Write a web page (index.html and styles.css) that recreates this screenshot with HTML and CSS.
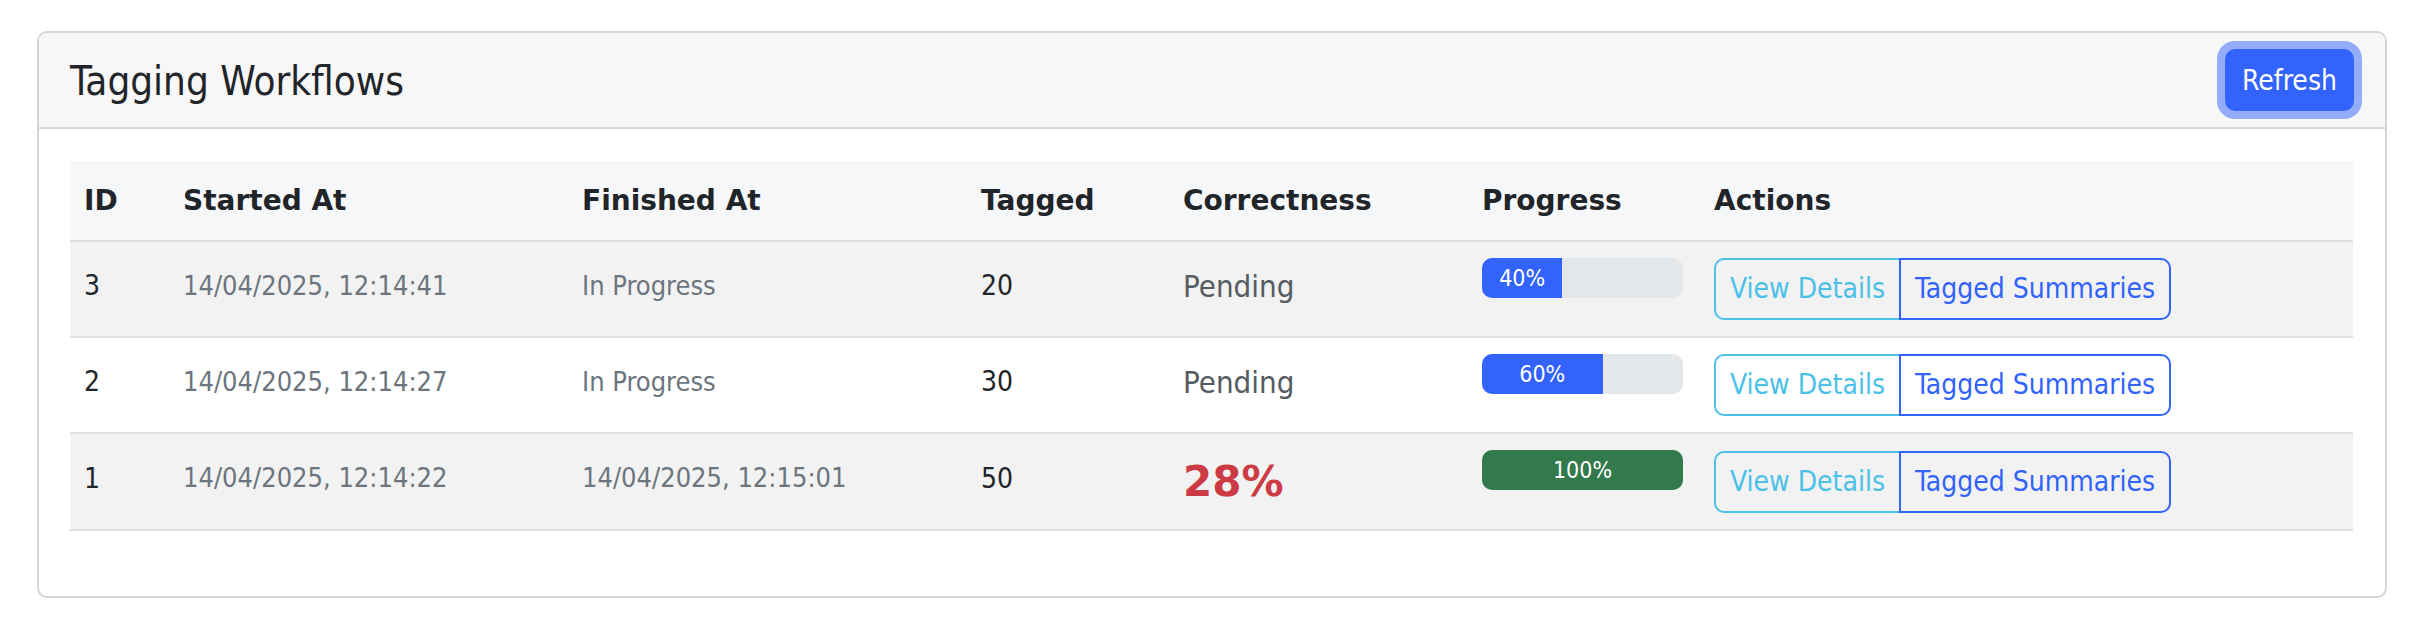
FILE: index.html
```html
<!DOCTYPE html>
<html lang="en">
<head>
<meta charset="utf-8">
<title>Tagging Workflows</title>
<link rel="stylesheet" href="styles.css">
</head>
<body>
<div class="page">
  <div class="card">
    <div class="card-header">
      <h4 class="card-title">Tagging Workflows</h4>
      <button class="btn-refresh" type="button">Refresh</button>
    </div>
    <div class="card-body">
      <table class="wf-table">
        <colgroup>
          <col class="col-id"><col class="col-start"><col class="col-finish"><col class="col-tagged"><col class="col-correct"><col class="col-progress"><col class="col-actions">
        </colgroup>
        <thead>
          <tr>
            <th>ID</th><th>Started At</th><th>Finished At</th><th>Tagged</th><th>Correctness</th><th>Progress</th><th>Actions</th>
          </tr>
        </thead>
        <tbody>
          <tr class="striped">
            <td class="id">3</td>
            <td class="muted">14/04/2025, 12:14:41</td>
            <td class="muted">In Progress</td>
            <td class="num">20</td>
            <td class="pending">Pending</td>
            <td class="prog-cell"><div class="progress"><div class="bar bar-blue" style="width:40%">40%</div></div></td>
            <td class="actions"><div class="btn-group"><button class="btn-o btn-info" type="button">View Details</button><button class="btn-o btn-primary" type="button">Tagged Summaries</button></div></td>
          </tr>
          <tr>
            <td class="id">2</td>
            <td class="muted">14/04/2025, 12:14:27</td>
            <td class="muted">In Progress</td>
            <td class="num">30</td>
            <td class="pending">Pending</td>
            <td class="prog-cell"><div class="progress"><div class="bar bar-blue" style="width:60%">60%</div></div></td>
            <td class="actions"><div class="btn-group"><button class="btn-o btn-info" type="button">View Details</button><button class="btn-o btn-primary" type="button">Tagged Summaries</button></div></td>
          </tr>
          <tr class="striped">
            <td class="id">1</td>
            <td class="muted">14/04/2025, 12:14:22</td>
            <td class="muted">14/04/2025, 12:15:01</td>
            <td class="num">50</td>
            <td class="score">28%</td>
            <td class="prog-cell"><div class="progress"><div class="bar bar-green" style="width:100%">100%</div></div></td>
            <td class="actions"><div class="btn-group"><button class="btn-o btn-info" type="button">View Details</button><button class="btn-o btn-primary" type="button">Tagged Summaries</button></div></td>
          </tr>
        </tbody>
      </table>
    </div>
  </div>
</div>
</body>
</html>
```

FILE: styles.css
```css
html, body {
  margin: 0;
  padding: 0;
  background: #ffffff;
}

body {
  font-family: "DejaVu Sans Condensed", "DejaVu Sans", sans-serif;
  font-stretch: condensed;
  color: #212529;
  font-size: 28px;
  line-height: 1.5;
}

.page {
  padding: 31px 39px 0 37px;
}

.card {
  border: 2px solid #d5d5d5;
  border-radius: 10px;
  overflow: hidden;
  background: #ffffff;
}

.card-header {
  display: flex;
  align-items: center;
  justify-content: space-between;
  height: 94px;
  padding: 0 31px 0 31px;
  background: #f7f7f7;
  border-bottom: 2px solid #d5d5d5;
}

.card-title {
  margin: 0;
  padding-top: 1px;
  font-size: 40px;
  font-weight: 400;
  line-height: 1.2;
  color: #212529;
}

.btn-refresh {
  width: 129px;
  height: 62px;
  padding: 0;
  font-family: inherit;
  font-stretch: condensed;
  font-size: 28px;
  color: #ffffff;
  background: #3263fd;
  border: 0;
  border-radius: 10px;
  box-shadow: 0 0 0 8px rgba(49, 99, 253, 0.5);
}

.card-body {
  padding: 32px 32px 65px 31px;
}

.wf-table {
  width: 100%;
  border-collapse: collapse;
  table-layout: fixed;
}

.col-id { width: 99px; }
.col-start { width: 399px; }
.col-finish { width: 399px; }
.col-tagged { width: 202px; }
.col-correct { width: 299px; }
.col-progress { width: 232px; }

.wf-table th {
  text-align: left;
  font-family: "DejaVu Sans", sans-serif;
  font-stretch: normal;
  font-weight: 700;
  font-size: 28px;
  line-height: 42px;
  padding: 19px 14px 18px 14px;
  background: #f6f7f8;
  border-bottom: 2px solid #dadde1;
  color: #212529;
  white-space: nowrap;
}

.wf-table td {
  padding: 13px 14px 19px 14px;
  vertical-align: middle;
  border-bottom: 2px solid #dee1e4;
  white-space: nowrap;
}

.wf-table tr.striped td {
  background: #f2f2f2;
}

td.id, td.num {
  color: #212529;
}

td.muted {
  color: #6c757d;
  font-size: 27px;
}

td.pending {
  color: #555b61;
  font-size: 31px;
}

td.score {
  font-family: "DejaVu Sans", sans-serif;
  font-stretch: normal;
  color: #cc3b43;
  font-weight: 700;
  font-size: 42px;
  padding-top: 16px;
  padding-bottom: 16px;
}

td.prog-cell {
  vertical-align: top;
  padding-top: 16px;
}

td.actions {
  padding-top: 16px;
  padding-bottom: 16px;
}

.progress {
  width: 201px;
  height: 40px;
  border-radius: 10px;
  background: #e4e7ea;
  overflow: hidden;
  display: flex;
}

.bar {
  height: 100%;
  color: #ffffff;
  font-size: 23px;
  line-height: 40px;
  text-align: center;
  white-space: nowrap;
}

.bar-blue { background: #3263fd; }
.bar-green { background: #32794b; }

.btn-group {
  display: inline-flex;
}

.btn-o {
  font-family: inherit;
  font-stretch: condensed;
  font-size: 28px;
  line-height: 42px;
  padding: 8px 14px;
  background: transparent;
  border: 2px solid;
  margin: 0;
  position: relative;
}

.btn-info {
  color: #4bc0e8;
  border-color: #4bc0e8;
  border-radius: 10px 0 0 10px;
}

.btn-primary {
  color: #3263fd;
  border-color: #3263fd;
  border-radius: 0 10px 10px 0;
  margin-left: -2px;
  z-index: 1;
}
```
